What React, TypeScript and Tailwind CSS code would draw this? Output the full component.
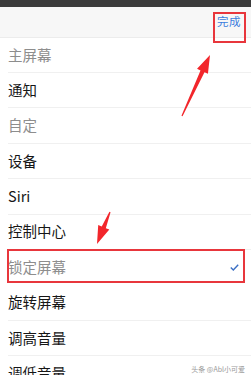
import React from 'react';

const rows = [
  { label: '主屏幕', muted: true },
  { label: '通知' },
  { label: '自定', muted: true },
  { label: '设备' },
  { label: 'Siri' },
  { label: '控制中心' },
  { label: '锁定屏幕', muted: true, checked: true, boxed: true },
  { label: '旋转屏幕' },
  { label: '调高音量' },
  { label: '调低音量' },
];

const Arrow = ({ x1, y1, x2, y2 }: { x1: number; y1: number; x2: number; y2: number }) => {
  const dx = x2 - x1;
  const dy = y2 - y1;
  const len = Math.hypot(dx, dy);
  const ux = dx / len;
  const uy = dy / len;
  const px = -uy;
  const py = ux;
  const head = 18;
  const bx = x2 - ux * head;
  const by = y2 - uy * head;
  const pts = [
    [x1 + px * 0.6, y1 + py * 0.6],
    [bx + px * 2.2, by + py * 2.2],
    [bx + px * 6, by + py * 6],
    [x2, y2],
    [bx - px * 6, by - py * 6],
    [bx - px * 2.2, by - py * 2.2],
    [x1 - px * 0.6, y1 - py * 0.6],
  ]
    .map((p) => p.join(','))
    .join(' ');
  return <polygon points={pts} fill="#f2262b" />;
};

export default function App() {
  return (
    <div className="relative w-[251px] h-[375px] overflow-hidden bg-white" style={{ fontFamily: '"Noto Sans CJK SC", "Noto Sans", sans-serif' }}>
      <div className="h-[7px] bg-[#3b3b3b]" />
      <div className="h-[30.6px] bg-[#f7f7f7] border-b border-[#ececec] flex items-center justify-end pr-[10px]">
        <span className="text-[11.5px] leading-none text-[#3b7ddd] tracking-[0.5px]">完成</span>
      </div>
      <div className="pl-[8px]">
        {rows.map((r) => (
          <div
            key={r.label}
            className={`relative h-[35.4px] flex items-center pr-[10px] ${r.boxed ? '' : 'border-b border-[#f0f0f0]'}`}
          >
            <span className={`text-[14.5px] leading-none ${r.muted ? 'text-[#8d8d8d]' : 'text-[#161616]'}`}>{r.label}</span>
            {r.checked && (
              <svg className="ml-auto mr-[2px]" width="9" height="7" viewBox="0 0 9 7">
                <path d="M0.8 3.6 L3.3 6 L8.2 0.8" fill="none" stroke="#3b6fc4" strokeWidth="1.4" />
              </svg>
            )}
            {r.boxed && <div className="absolute left-[-1px] right-[6px] top-[-0.5px] bottom-[2px] border-2 border-[#e8363c]" />}
          </div>
        ))}
      </div>
      <div className="absolute left-[213px] top-[12px] w-[33px] h-[31px] border-2 border-[#e8363c]" />
      <svg className="absolute inset-0 pointer-events-none" width="251" height="375">
        <Arrow x1={182} y1={116} x2={210} y2={55} />
        <Arrow x1={110} y1={212} x2={97} y2={244} />
      </svg>
      <div className="absolute right-[6px] top-[366px] text-[7px] leading-none text-[#9a9a9a]">头条 @Abl小可爱</div>
    </div>
  );
}
